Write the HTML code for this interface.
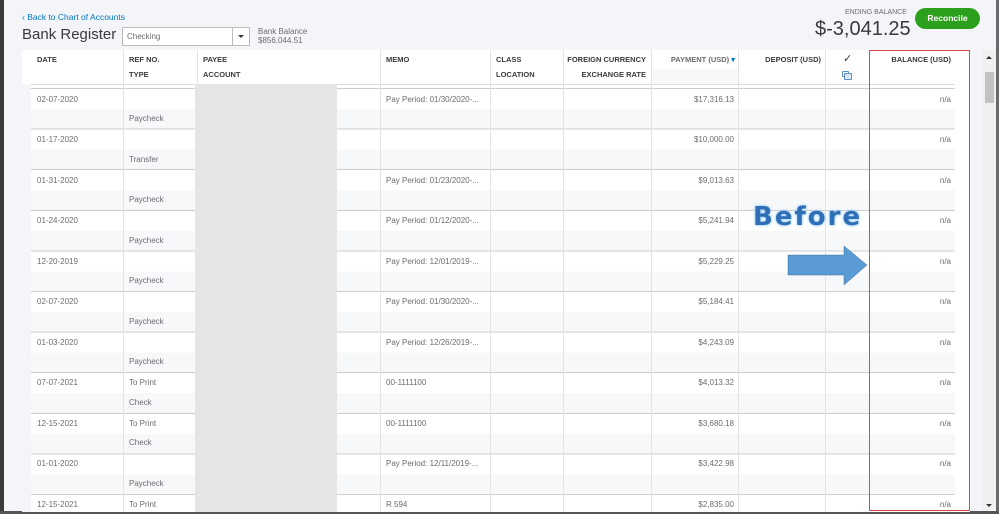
<!DOCTYPE html>
<html><head><meta charset="utf-8"><style>
*{margin:0;padding:0;box-sizing:border-box}
body{width:999px;height:514px;overflow:hidden;background:#f4f5f8;font-family:"Liberation Sans",sans-serif;position:relative}
.a{position:absolute}
.t{position:absolute;font-size:8px;color:#6b6c72;white-space:nowrap}
.h{position:absolute;font-size:7.5px;color:#393a3d;font-weight:bold;white-space:nowrap}
.r{text-align:right}
</style></head><body>
<div class="a" style="left:0;top:0;width:4px;height:514px;background:#3a3a3a"></div>
<div class="a" style="left:996px;top:0;width:3px;height:514px;background:#6a6a6a"></div>
<div class="a" style="left:0;top:511px;width:999px;height:3px;background:#555"></div>

<div class="t" style="left:22px;top:12px;color:#0077c5;font-size:8.5px">&#8249; Back to Chart of Accounts</div>
<div class="a" style="left:22px;top:26px;font-size:15px;color:#393a3d">Bank Register</div>
<div class="a" style="left:122px;top:27px;width:128px;height:19px;border:1px solid #bbb;background:#fff"></div>
<div class="t" style="left:127px;top:32px">Checking</div>
<div class="a" style="left:232px;top:27px;width:1px;height:19px;background:#bbb"></div>
<div class="a" style="left:238px;top:35px;border-left:3px solid transparent;border-right:3px solid transparent;border-top:3px solid #393a3d"></div>
<div class="t" style="left:258px;top:27px;color:#6b6c72">Bank Balance</div>
<div class="t" style="left:258px;top:36px;color:#6b6c72">$856,044.51</div>
<div class="t" style="left:845px;top:9px;font-size:7px">ENDING BALANCE</div>
<div class="a" style="left:815px;top:18px;font-size:20px;color:#393a3d">$-3,041.25</div>
<div class="a" style="left:915px;top:8px;width:65px;height:21px;border-radius:11px;background:#2ca01c;color:#fff;font-size:8.5px;font-weight:bold;text-align:center;line-height:21px">Reconcile</div>

<div class="a" style="left:22px;top:50px;width:948px;height:462px;background:#fff"></div>
<div class="a" style="left:22px;top:84px;width:9px;height:428px;background:#f4f5f8"></div>
<div class="a" style="left:31px;top:84px;width:924px;height:1px;background:#ddd"></div>
<div class="a" style="left:651px;top:69px;width:87px;height:15px;background:#f7f8fa"></div>
<div class="h" style="left:37px;top:55px">DATE</div>
<div class="h" style="left:129px;top:55px">REF NO.</div>
<div class="h" style="left:129px;top:70px">TYPE</div>
<div class="h" style="left:203px;top:55px">PAYEE</div>
<div class="h" style="left:203px;top:70px">ACCOUNT</div>
<div class="h" style="left:386px;top:55px">MEMO</div>
<div class="h" style="left:496px;top:55px">CLASS</div>
<div class="h" style="left:496px;top:70px">LOCATION</div>
<div class="h r" style="left:563px;top:55px;width:83px">FOREIGN CURRENCY</div>
<div class="h r" style="left:563px;top:70px;width:83px">EXCHANGE RATE</div>
<div class="h r" style="left:651px;top:55px;width:84px;color:#6b6c72">PAYMENT (USD) <span style="color:#0077c5">&#9662;</span></div>
<div class="h r" style="left:738px;top:55px;width:83px">DEPOSIT (USD)</div>
<div class="a" style="left:843px;top:52px;font-size:11px;color:#393a3d">&#10003;</div>
<div class="a" style="left:842px;top:71px;width:7px;height:6px;border:1px solid #5a8ec9;border-radius:1px"></div>
<div class="a" style="left:844px;top:73px;width:8px;height:7px;border:1.5px solid #5a8ec9;border-radius:1px;background:#dbe6f3"></div>
<div class="h r" style="left:869px;top:55px;width:82px">BALANCE (USD)</div>

<div class="a" style="left:31px;top:88px;width:924px;height:424px;background:repeating-linear-gradient(#ccc 0,#ccc 1px,#fff 1px,#fff 21px,#f7f8fa 21px,#f7f8fa 40.6px)"></div>
<div class="a" style="left:123px;top:50px;width:1px;height:462px;background:#e3e3e3"></div>
<div class="a" style="left:197px;top:50px;width:1px;height:462px;background:#e3e3e3"></div>
<div class="a" style="left:380px;top:50px;width:1px;height:462px;background:#e3e3e3"></div>
<div class="a" style="left:490px;top:50px;width:1px;height:462px;background:#e3e3e3"></div>
<div class="a" style="left:563px;top:50px;width:1px;height:462px;background:#e3e3e3"></div>
<div class="a" style="left:651px;top:50px;width:1px;height:462px;background:#e3e3e3"></div>
<div class="a" style="left:738px;top:50px;width:1px;height:462px;background:#e3e3e3"></div>
<div class="a" style="left:825px;top:50px;width:1px;height:462px;background:#e3e3e3"></div>
<div class="a" style="left:195px;top:84px;width:142px;height:428px;background:#e5e5e5"></div>

<div class="t" style="left:37px;top:95px">02-07-2020</div><div class="t" style="left:129px;top:114px">Paycheck</div><div class="t" style="left:386px;top:95px">Pay Period: 01/30/2020-...</div><div class="t r" style="left:651px;top:95px;width:83px">$17,316.13</div><div class="t r" style="left:869px;top:95px;width:82px">n/a</div>
<div class="t" style="left:37px;top:135px">01-17-2020</div><div class="t" style="left:129px;top:155px">Transfer</div><div class="t r" style="left:651px;top:135px;width:83px">$10,000.00</div><div class="t r" style="left:869px;top:135px;width:82px">n/a</div>
<div class="t" style="left:37px;top:176px">01-31-2020</div><div class="t" style="left:129px;top:195px">Paycheck</div><div class="t" style="left:386px;top:176px">Pay Period: 01/23/2020-...</div><div class="t r" style="left:651px;top:176px;width:83px">$9,013.63</div><div class="t r" style="left:869px;top:176px;width:82px">n/a</div>
<div class="t" style="left:37px;top:216px">01-24-2020</div><div class="t" style="left:129px;top:236px">Paycheck</div><div class="t" style="left:386px;top:216px">Pay Period: 01/12/2020-...</div><div class="t r" style="left:651px;top:216px;width:83px">$5,241.94</div><div class="t r" style="left:869px;top:216px;width:82px">n/a</div>
<div class="t" style="left:37px;top:257px">12-20-2019</div><div class="t" style="left:129px;top:276px">Paycheck</div><div class="t" style="left:386px;top:257px">Pay Period: 12/01/2019-...</div><div class="t r" style="left:651px;top:257px;width:83px">$5,229.25</div><div class="t r" style="left:869px;top:257px;width:82px">n/a</div>
<div class="t" style="left:37px;top:297px">02-07-2020</div><div class="t" style="left:129px;top:317px">Paycheck</div><div class="t" style="left:386px;top:297px">Pay Period: 01/30/2020-...</div><div class="t r" style="left:651px;top:297px;width:83px">$5,184.41</div><div class="t r" style="left:869px;top:297px;width:82px">n/a</div>
<div class="t" style="left:37px;top:338px">01-03-2020</div><div class="t" style="left:129px;top:357px">Paycheck</div><div class="t" style="left:386px;top:338px">Pay Period: 12/26/2019-...</div><div class="t r" style="left:651px;top:338px;width:83px">$4,243.09</div><div class="t r" style="left:869px;top:338px;width:82px">n/a</div>
<div class="t" style="left:37px;top:378px">07-07-2021</div><div class="t" style="left:129px;top:378px">To Print</div><div class="t" style="left:129px;top:398px">Check</div><div class="t" style="left:386px;top:378px">00-1111100</div><div class="t r" style="left:651px;top:378px;width:83px">$4,013.32</div><div class="t r" style="left:869px;top:378px;width:82px">n/a</div>
<div class="t" style="left:37px;top:419px">12-15-2021</div><div class="t" style="left:129px;top:419px">To Print</div><div class="t" style="left:129px;top:438px">Check</div><div class="t" style="left:386px;top:419px">00-1111100</div><div class="t r" style="left:651px;top:419px;width:83px">$3,680.18</div><div class="t r" style="left:869px;top:419px;width:82px">n/a</div>
<div class="t" style="left:37px;top:459px">01-01-2020</div><div class="t" style="left:129px;top:479px">Paycheck</div><div class="t" style="left:386px;top:459px">Pay Period: 12/11/2019-...</div><div class="t r" style="left:651px;top:459px;width:83px">$3,422.98</div><div class="t r" style="left:869px;top:459px;width:82px">n/a</div>
<div class="t" style="left:37px;top:500px">12-15-2021</div><div class="t" style="left:129px;top:500px">To Print</div><div class="t" style="left:386px;top:500px">R 594</div><div class="t r" style="left:651px;top:500px;width:83px">$2,835.00</div><div class="t r" style="left:869px;top:500px;width:82px">n/a</div>

<div class="a" style="left:869px;top:50px;width:101px;height:461px;border:1px solid #e04848"></div>

<div class="a" style="left:983px;top:50px;width:13px;height:461px;background:#f0f0f0"></div>
<div class="a" style="left:985px;top:72px;width:9px;height:31px;background:#c2c2c2"></div>
<div class="a" style="left:986px;top:56px;border-left:3px solid transparent;border-right:3px solid transparent;border-bottom:3px solid #333"></div>
<div class="a" style="left:986px;top:504px;border-left:3px solid transparent;border-right:3px solid transparent;border-top:3px solid #333"></div>

<div class="a" style="left:753px;top:202px;font-size:26px;font-weight:bold;color:#2f6fb5;letter-spacing:2px;font-family:'DejaVu Sans',sans-serif;text-shadow:0 0 2px #9fd0f5,0 0 3px #9fd0f5">Before</div>
<svg class="a" style="left:786px;top:245px" width="82" height="42"><polygon points="2,10 58,10 58,1 81,20 58,40 58,30 2,30" fill="#5b9bd5" stroke="#41719c" stroke-width="0.5"/></svg>
</body></html>
